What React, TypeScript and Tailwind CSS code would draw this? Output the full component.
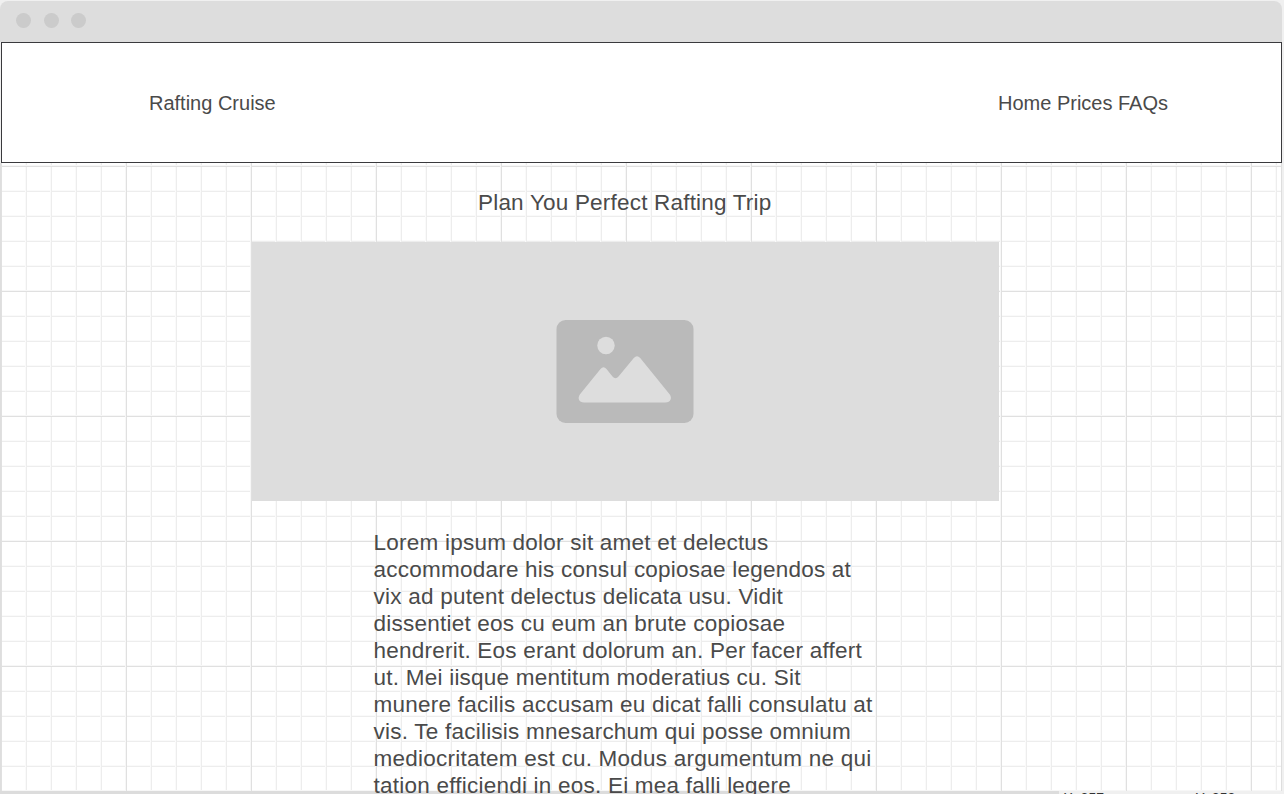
const paragraph = [
  'Lorem ipsum dolor sit amet et delectus',
  'accommodare his consul copiosae legendos at',
  'vix ad putent delectus delicata usu. Vidit',
  'dissentiet eos cu eum an brute copiosae',
  'hendrerit. Eos erant dolorum an. Per facer affert',
  'ut. Mei iisque mentitum moderatius cu. Sit',
  'munere facilis accusam eu dicat falli consulatu at',
  'vis. Te facilisis mnesarchum qui posse omnium',
  'mediocritatem est cu. Modus argumentum ne qui',
  'tation efficiendi in eos. Ei mea falli legere',
];

function TitleBar() {
  return (
    <div className="h-[41px] shrink-0 rounded-t-lg bg-[#dddddd] flex items-start gap-[12.5px] pl-4 pt-3">
      <span className="size-[15px] rounded-full bg-[#cbcbcb]" />
      <span className="size-[15px] rounded-full bg-[#cbcbcb]" />
      <span className="size-[15px] rounded-full bg-[#cbcbcb]" />
    </div>
  );
}

function Header() {
  return (
    <header className="ml-px h-[121px] shrink-0 border border-[#3a3a3d] bg-white flex items-center justify-between pl-[147px] pr-[113px] text-xl leading-6">
      <span>Rafting Cruise</span>
      <nav className="flex gap-[5.5px]">
        <span>Home</span>
        <span>Prices</span>
        <span>FAQs</span>
      </nav>
    </header>
  );
}

function ImagePlaceholder() {
  return (
    <div className="ml-[250.5px] mt-[26px] h-[259px] w-[747.5px] shrink-0 bg-[#dddddd] pl-[304.5px] pt-[77px]">
      <svg width="138" height="104" viewBox="0 -0.5 138 104" className="block">
        <rect x="0.5" y="0.5" width="137" height="103" rx="9" fill="#bababa" />
        <circle cx="50" cy="26" r="8.7" fill="#dddddd" />
        <path
          d="M28 83H109.5C114.5 83 116.5 78.5 113.6 74.7L84.2 38.5Q81 34.8 77.8 38.5L62.5 57Q59.5 60.5 56.5 57L50.5 49.5Q47.5 45.8 44.5 49.5L24 74.7C21.2 78.5 23 83 28 83Z"
          fill="#dddddd"
        />
      </svg>
    </div>
  );
}

export default function App() {
  return (
    <div className="h-[794px] w-[1284px] overflow-hidden bg-[#f0f0f0] pt-px flex flex-col font-['Liberation_Sans',Arial,sans-serif] text-[#4a4a4a]">
      <div className="relative z-10 w-[1282px] h-[790px] shrink-0 flex flex-col">
        <TitleBar />
        <Header />
        <main className="h-[628px] w-[1282px] shrink-0 border-x border-[#dedede] bg-white bg-[linear-gradient(to_right,#f7f7f7_1px,#e0e0e0_1px,#e0e0e0_2px,transparent_2px),linear-gradient(to_bottom,#f7f7f7_1px,#e0e0e0_1px,#e0e0e0_2px,transparent_2px),linear-gradient(to_right,#fafafa_1px,#ededed_1px,#ededed_2px,transparent_2px),linear-gradient(to_bottom,#fafafa_1px,#ededed_1px,#ededed_2px,transparent_2px)] bg-size-[125px_125px,125px_125px,25px_25px,25px_25px] bg-position-[124px_2px,0px_2px,24px_2px,0px_2px] flex flex-col text-[22.5px] leading-[27px] tracking-[0.225px]">
          <h1 className="mt-[26px] ml-[477px] tracking-[0.2px] whitespace-nowrap">Plan You Perfect Rafting Trip</h1>
          <ImagePlaceholder />
          <p className="mt-[28px] ml-[372.6px] whitespace-nowrap">
            {paragraph.map((line) => (
              <span key={line} className="block">{line}</span>
            ))}
          </p>
        </main>
      </div>
      <footer className="h-[3px] shrink-0 flex">
        <div className="h-[3px] w-[1059px] bg-[#dcdcdc]" />
        <div className="ml-[4.5px] flex text-[14px] leading-[14px] text-[#333333]">
          <span className="w-[132px]">X: 257</span>
          <span>Y: 258</span>
        </div>
      </footer>
    </div>
  );
}
